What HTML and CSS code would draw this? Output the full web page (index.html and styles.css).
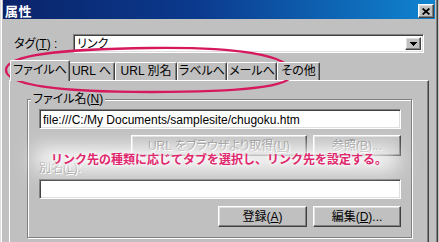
FILE: index.html
```html
<!DOCTYPE html>
<html lang="ja">
<head>
<meta charset="utf-8">
<title>属性</title>
<link rel="stylesheet" href="styles.css">
</head>
<body>
<div class="window">
  <div class="titlebar">
    <span class="title">属性</span>
    <span class="close raised">
      <svg width="8" height="7" viewBox="0 0 8 7"><path d="M0.6 0.5L7.4 6.5M7.4 0.5L0.6 6.5" stroke="#000" stroke-width="1.7" fill="none"/></svg>
    </span>
  </div>
  <div class="tag-row">
    <span class="tag-label">タグ(<u>T</u>) :</span>
    <div class="combo sunken">
      <span class="combo-text">リンク</span>
      <span class="dd raised">
        <svg width="7" height="4" viewBox="0 0 7 4"><path d="M0 0h7v1h-1v1h-1v1h-1v1h-1v-1h-1v-1h-1v-1h-1z" fill="#000"/></svg>
      </span>
    </div>
  </div>
  <div class="tabs">
    <span class="tab active t1">ファイルへ</span>
    <span class="tab t2">URL へ</span>
    <span class="tab t3">URL 別名</span>
    <span class="tab t4">ラベルへ</span>
    <span class="tab t5">メールへ</span>
    <span class="tab t6">その他</span>
  </div>
  <div class="panel">
    <fieldset class="group">
      <legend>ファイル名(<u>N</u>)</legend>
      <div class="field sunken">file:///C:/My Documents/samplesite/chugoku.htm</div>
      <div class="btn-row first">
        <span class="btn raised disabled wide">URL をブラウザより取得(<u>U</u>)</span>
        <span class="btn raised disabled">参照(<u>B</u>)...</span>
      </div>
      <div class="sub-label disabled">別名(<u>L</u>):</div>
      <div class="field sunken"></div>
      <div class="btn-row second">
        <span class="btn raised reg">登録(<u>A</u>)</span>
        <span class="btn raised">編集(<u>D</u>)...</span>
      </div>
    </fieldset>
  </div>
  <div class="glow"></div>
  <div class="note">リンク先の種類に応じてタブを選択し、リンク先を設定する。</div>
  <svg class="ellipse" width="439" height="242" viewBox="0 0 439 242">
    <path d="M5 70 C5 55 60 49 150 48 C232 47 291 54 291 74 C291 87 240 92 150 92 C62 92 5 86 5 70 Z" fill="none" stroke="#d6185c" stroke-width="2.4"/>
  </svg>
</div>
</body>
</html>
```

FILE: styles.css
```css
* { box-sizing: border-box; }

body {
  margin: 0;
  background: #c0c0c0;
  font-family: "Liberation Sans", "Noto Sans CJK JP", sans-serif;
  font-size: 12px;
  color: #000;
  font-feature-settings: "palt" 1;
}

.window {
  position: relative;
  width: 438px;
  height: 242px;
  overflow: hidden;
  background: #c0c0c0;
  border-left: 1px solid #dfdfdf;
  border-right: 1px solid #404040;
  box-shadow: inset 1px 0 #fff, inset -1px 0 #808080;
  padding: 0 2px;
}

.raised {
  border: 1px solid;
  border-color: #fff #404040 #404040 #fff;
  box-shadow: inset -1px -1px #808080, inset 1px 1px #dfdfdf;
  background: #c0c0c0;
}

.sunken {
  border: 1px solid;
  border-color: #808080 #fff #fff #808080;
  box-shadow: inset 1px 1px #404040, inset -1px -1px #dfdfdf;
  background: #fff;
}

/* title bar */
.titlebar {
  height: 19px;
  display: flex;
  align-items: flex-start;
  background: linear-gradient(to right, #0a246a 0%, #0b3a8e 45%, #1084d0 100%);
  padding: 0 1px 0 2px;
}

.title {
  color: #fff;
  font-size: 13px;
  font-weight: bold;
  line-height: 15px;
  margin-top: 4px;
  letter-spacing: 0.5px;
}

.close {
  margin-left: auto;
  margin-top: 4px;
  width: 16px;
  height: 14px;
  display: flex;
  align-items: center;
  justify-content: center;
}

.close svg { display: block; }

/* tag row */
.tag-row {
  display: flex;
  align-items: center;
  margin-top: 15px;
  padding: 0 11px;
}

.tag-label {
  width: 59px;
  line-height: 14px;
  padding-top: 1px;
}

.combo {
  flex: 1;
  height: 19px;
  display: flex;
  padding: 2px;
}

.combo-text {
  flex: 1;
  line-height: 15px;
  padding-left: 1px;
}

.dd {
  width: 16px;
  display: flex;
  align-items: center;
  justify-content: center;
}

.dd svg { display: block; }

/* tabs */
.tabs {
  display: flex;
  align-items: flex-end;
  height: 20px;
  margin: 7px 6px 0;
  padding-left: 3px;
  position: relative;
  z-index: 2;
}

.tab {
  height: 18px;
  border-top: 1px solid #fff;
  border-left: 1px solid #fff;
  border-right: 1px solid #404040;
  box-shadow: inset -1px 0 #808080;
  border-radius: 2px 2px 0 0;
  background: #c0c0c0;
  text-align: center;
  line-height: 16px;
  white-space: nowrap;
}

.tab.active {
  height: 21px;
  margin: 0 -2px -1px;
  position: relative;
  z-index: 3;
  line-height: 18px;
}

.t1 { width: 60px; }
.t2 { width: 47px; }
.t3 { width: 62px; }
.t4 { width: 50px; }
.t5 { width: 50px; }
.t6 { width: 43px; }

/* panel */
.panel {
  margin: 0 6px;
  height: 175px;
  border-top: 1px solid #fff;
  border-left: 1px solid #fff;
  border-right: 1px solid #404040;
  box-shadow: inset -1px 0 #808080;
  padding: 11px 0 0 17px;
}

.group {
  margin: 0;
  width: 385px;
  min-width: 0;
  border: 1px solid #808080;
  box-shadow: 1px 1px 0 #fff, inset 1px 1px 0 #fff;
  padding: 3px 10px 10px 11px;
}

.group legend {
  padding: 0 2px;
  margin-left: -8px;
  line-height: 14px;
  background: #c0c0c0;
}

.field {
  height: 20px;
  padding: 2px 3px;
  line-height: 16px;
  white-space: nowrap;
  overflow: hidden;
}

.btn-row {
  display: flex;
  justify-content: flex-end;
  gap: 6px;
}

.btn-row.first { margin-top: 6px; }
.btn-row.second { margin-top: 7px; margin-bottom: 0; }

.btn {
  width: 88px;
  height: 21px;
  display: flex;
  align-items: center;
  justify-content: center;
  line-height: 14px;
  white-space: nowrap;
}

.btn.wide { width: 176px; }
.btn.reg { width: 89px; }

.disabled {
  color: #808080;
  text-shadow: 1px 1px 0 #fff;
}

.sub-label {
  margin-top: 5px;
  line-height: 14px;
  height: 14px;
}

.sub-label + .field { margin-top: 4px; }

/* annotation overlay */
.glow {
  position: absolute;
  left: 34px;
  top: 148px;
  width: 362px;
  height: 22px;
  background: #fff;
  filter: blur(10px);
  opacity: 0.95;
}

.note {
  position: absolute;
  left: 50px;
  top: 151px;
  color: #e0286e;
  font-family: "Noto Sans CJK JP", sans-serif;
  font-feature-settings: normal;
  font-size: 12px;
  font-weight: bold;
  line-height: 15px;
  white-space: nowrap;
  text-shadow: 0 0 3px #fff, 0 0 6px #fff;
}

.ellipse {
  position: absolute;
  left: 0;
  top: 0;
  pointer-events: none;
}
```
